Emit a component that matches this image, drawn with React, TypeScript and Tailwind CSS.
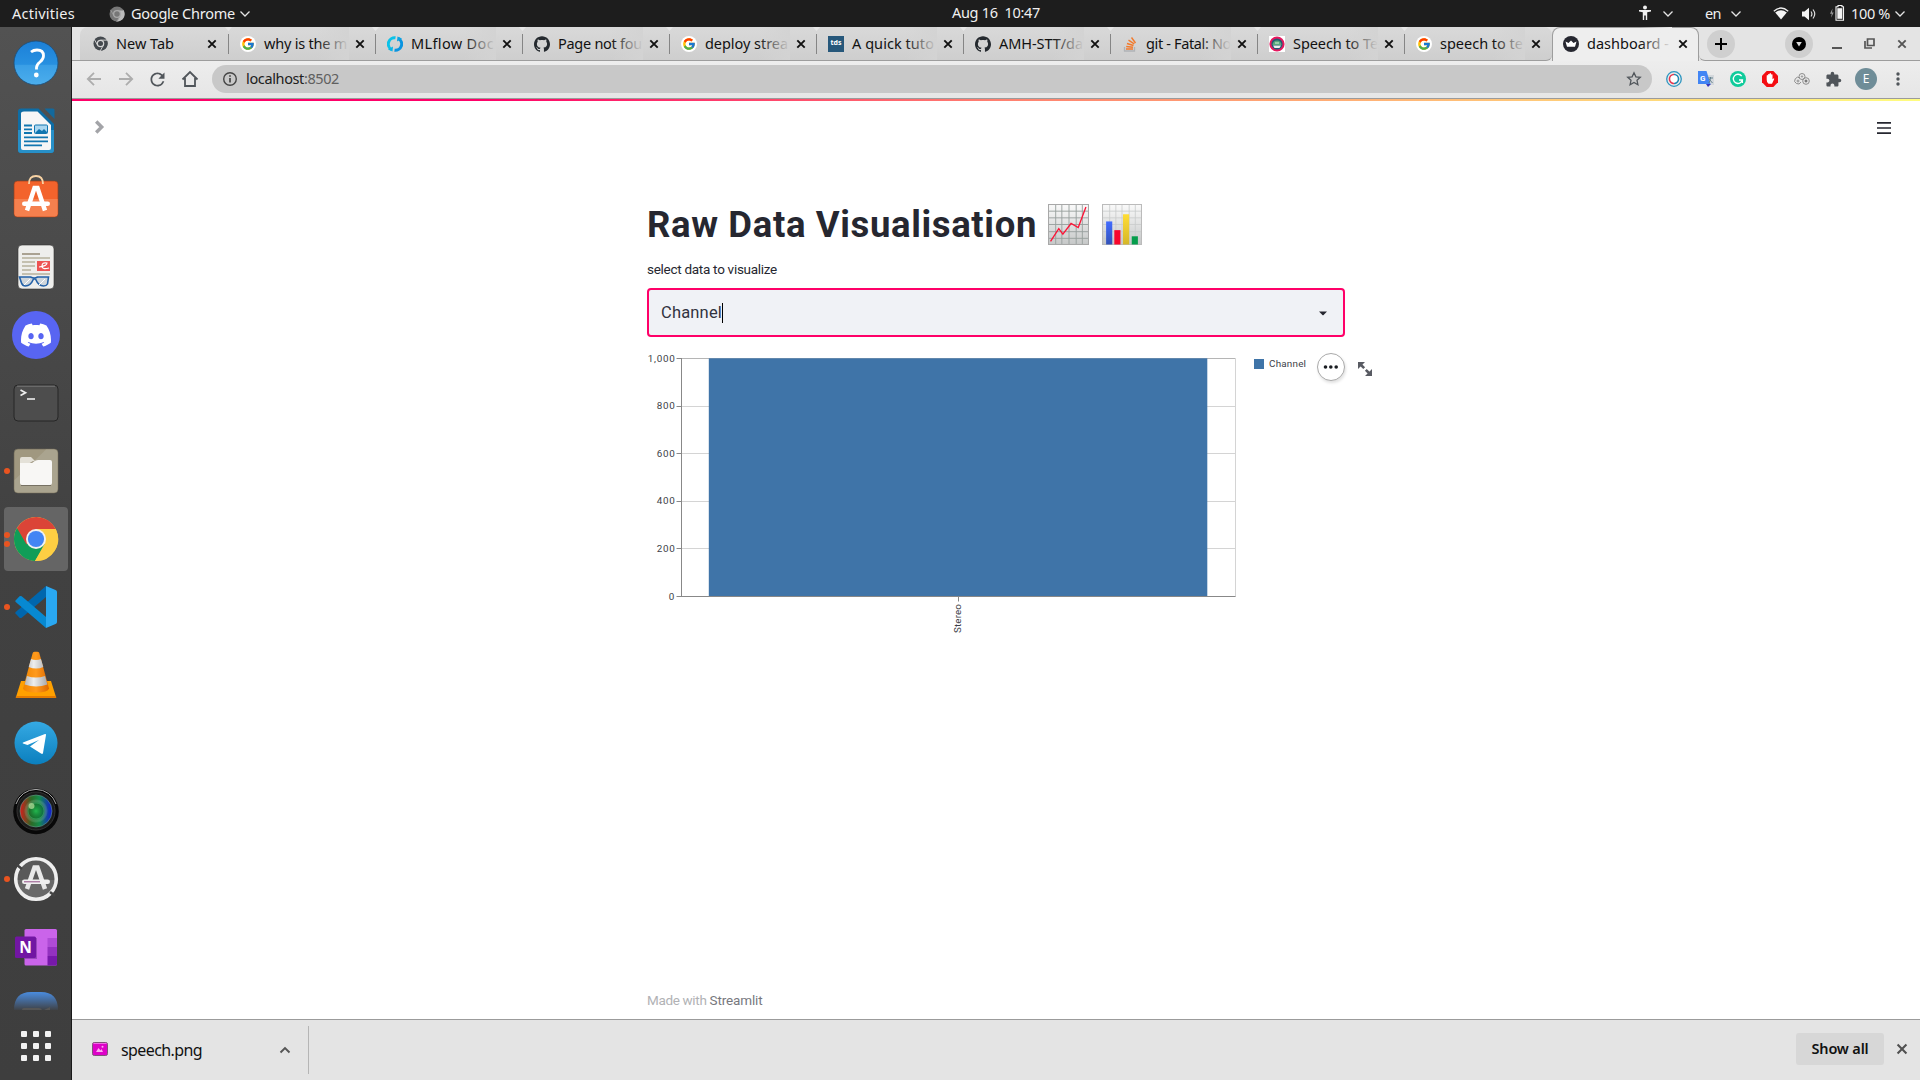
import React, { useLayoutEffect, useRef, useState } from "react";
import { SiDiscord, SiGithub } from "react-icons/si";
import { FcGoogle } from "react-icons/fc";
import { MdExtension, MdRefresh } from "react-icons/md";

const UI = "font-['Noto_Sans','Open_Sans',sans-serif]";

/* Text tracked so that it fills the given width. */
function Fit({ w, className = "", children }: { w: number; className?: string; children: string }) {
  const ref = useRef<HTMLSpanElement>(null);
  const [ls, setLs] = useState(0);
  useLayoutEffect(() => {
    if (ref.current) {
      const natural = ref.current.getBoundingClientRect().width - ls * children.length;
      setLs((w - natural) / children.length);
    }
  }, [w, children]);
  return (
    <span ref={ref} className={"inline-block shrink-0 whitespace-pre " + className} style={{ letterSpacing: ls }}>
      {children}
    </span>
  );
}

function Chevron({ className = "" }: { className?: string }) {
  return (
    <svg className={"shrink-0 " + className} width="12" height="8" viewBox="0 0 12 8" fill="none" stroke="#e4e4e4" strokeWidth="1.3">
      <path d="M1.5 1.5 6 6l4.500-4.500" />
    </svg>
  );
}

function ChromeGlyph({ size, dark }: { size: number; dark?: boolean }) {
  const a = dark ? "#44494e" : "#777";
  const b = dark ? "#44494e" : "#bbb";
  const gap = dark ? "#d4d4d4" : "#999";
  return (
    <svg width={size} height={size} viewBox="0 0 16 16" className="shrink-0">
      <circle cx="8" cy="8" r="7.500" fill={a} />
      <path d="M8 4.500h6.800A7.500 7.500 0 0 1 8 15.500l3-5.500z" fill={b} />
      <path d="M8 4.400h7M4.900 9.800 1.500 3.800M11 9.900l-3.300 6" stroke={gap} strokeWidth="1" />
      <circle cx="8" cy="8" r="4" fill={dark ? "#d6d6d6" : "#aaa"} />
      <circle cx="8" cy="8" r="2.700" fill={a} />
    </svg>
  );
}

function TopBar() {
  return (
    <header className={"flex h-[27px] w-full shrink-0 items-center bg-[#1d1d1d] text-[14.500px] leading-[27px] text-[#f0f0f0] " + UI}>
      <div className="flex w-[952px] items-center pl-3">
        <Fit w={63}>Activities</Fit>
        <div className="ml-[34px] flex"><ChromeGlyph size={16} /></div>
        <Fit w={104} className="ml-[6px]">Google Chrome</Fit>
        <Chevron className="ml-[4px]" />
      </div>
      <Fit w={88} className="-mt-[2px]">Aug 16  10:47</Fit>
      <div className="flex flex-1 items-center">
        <svg className="-mt-px ml-[598px]" width="14" height="16" viewBox="0 0 14 16" fill="#f0f0f0">
          <circle cx="7" cy="2.400" r="2" />
          <path d="M1 5h12v1.500L9.200 7.200V15H7.800v-4.500H6.200V15H4.800V7.200L1 6.500z" />
        </svg>
        <Chevron className="ml-[10px]" />
        <Fit w={16} className="ml-[31px]">en</Fit>
        <Chevron className="ml-[9px]" />
        <svg className="ml-[31px]" width="16" height="13" viewBox="0 0 16 13">
          <path d="M.8 4.200Q8-2.200 15.200 4.200" fill="none" stroke="#eee" strokeWidth="1.300" />
          <path d="M2.200 5.400Q8 1 13.800 5.400L8 12.500z" fill="#f4f4f4" />
        </svg>
        <svg className="ml-[12px]" width="16" height="14" viewBox="0 0 16 14">
          <path d="M1 4.500h2.500L8 .8v12.400L3.500 9.500H1z" fill="#f4f4f4" />
          <path d="M10 4.500q1.800 2.500 0 5M12 2.500q3.500 4.500 0 9" fill="none" stroke="#ddd" strokeWidth="1.200" />
        </svg>
        <svg className="-mt-[2px] ml-[12px]" width="16" height="16" viewBox="0 0 16 16">
          <path d="M3.500 3.500 1 8.800h1.800l-.8 4L4.700 7.500H3z" fill="#999" />
          <path d="M7 1.800h2V.5h4v1.300h1.500v13.400H7z" fill="none" stroke="#f4f4f4" strokeWidth="1.100" />
          <path d="M8.300 3.200h5v10.600h-5z" fill="#f4f4f4" />
        </svg>
        <Fit w={39} className="ml-[6px]">100 %</Fit>
        <Chevron className="ml-[4px]" />
      </div>
    </header>
  );
}

function Svg({ children }: { children: React.ReactNode }) {
  return <svg width="48" height="48" viewBox="0 0 48 48" className="shrink-0">{children}</svg>;
}

const dock: { dots: number; active?: boolean; icon: React.ReactNode }[] = [
  {
    dots: 0,
    icon: (
      <Svg>
        <defs><linearGradient id="hp" x2="0" y2="1"><stop stopColor="#1c80d8" /><stop offset=".53" stopColor="#2790e0" /><stop offset=".55" stopColor="#3a9fe6" /><stop offset="1" stopColor="#4caeec" /></linearGradient></defs>
        <circle cx="24" cy="24" r="22" fill="url(#hp)" stroke="#1b4f7c" strokeWidth=".8" />
        <path d="M19 13q2.500-2 6-2 6.500 0 6.500 5.800 0 3.400-3.500 6.200-3.500 2.800-3.500 5.500v2" fill="none" stroke="#fff" strokeWidth="2.800" />
        <circle cx="24.300" cy="36" r="2.400" fill="#fff" />
      </Svg>
    ),
  },
  {
    dots: 0,
    icon: (
      <Svg>
        <path d="M9 1.500h17.500L42 17v26q0 3-3 3H9q-3 0-3-3V4.500q0-3 3-3z" fill="#0e6da5" />
        <path d="M6 23h36v20q0 3-3 3H9q-3 0-3-3z" fill="#2790c8" />
        <path d="M32.500 1.500h8.500q1.500 0 1.500 1.500v9z" fill="#13699c" />
        <path d="M12 4.500h13.500L39 18v23q0 2-2 2H11q-2 0-2-2V6.500q0-2 3-2z" fill="#f6f6f6" />
        <path d="M12 18.500h8M12 22.300h8M12 26h8M12 30.300h24M12 34.300h24M12 38.300h18" stroke="#1176b0" strokeWidth="1.800" />
        <rect x="22.500" y="18" width="13" height="8.500" rx="1" fill="#abd7f0" stroke="#1176b0" />
        <path d="m23 26 4-4 3 2 2-2 3 3v1z" fill="#1176b0" />
      </Svg>
    ),
  },
  {
    dots: 0,
    icon: (
      <svg width="48" height="52" viewBox="0 2 48 52" className="shrink-0">
        <rect x="2" y="10" width="44" height="36" rx="3.500" fill="#f3632c" stroke="#92401f" strokeWidth=".7" />
        <path d="M2.400 28h43.200v14.500q0 3-3 3H5.400q-3 0-3-3z" fill="#f5804e" />
        <path d="M17 13q0-8 7-8t7 8" fill="none" stroke="#f8d3a4" strokeWidth="1.800" />
        <path d="M15 39.500 22.500 17h3L33 39.500" fill="none" stroke="#fff" strokeWidth="4.500" />
        <rect x="10" y="30.500" width="28" height="4.600" rx="2.300" fill="#fff" />
      </svg>
    ),
  },
  {
    dots: 0,
    icon: (
      <Svg>
        <rect x="6" y="2" width="36" height="44" rx="4" fill="#eeeeec" stroke="#333" strokeWidth=".6" />
        <path d="M10 11h18" stroke="#aaa292" strokeWidth="2" />
        <path d="M10 15h28M10 19h13M10 23h13M10 27h9M10 31h28" stroke="#c4c0b0" strokeWidth="2" />
        <rect x="25" y="18" width="13" height="10" fill="#ed5353" />
        <path d="M27 24q8-1 8-4-5-1-5 3t7 2" fill="none" stroke="#fff" strokeWidth="1.200" />
        <path d="M7.500 34h11q4 2 7 0h11l-1 7q-1 2-4 2-5 0-8-7h-2q-3 7-8 7-3 0-4-3z" fill="#cfd6dc" stroke="#2361a8" strokeWidth="1.600" />
        <path d="m12 42 6-6m9 6 6-6" stroke="#fff" />
      </Svg>
    ),
  },
  {
    dots: 0,
    icon: (
      <div className="flex size-12 items-center justify-center rounded-full bg-[#5865f2]">
        <SiDiscord size={30} color="#fff" />
      </div>
    ),
  },
  {
    dots: 0,
    icon: (
      <Svg>
        <rect x="2" y="6" width="44" height="36" rx="4" fill="#4d4d4d" stroke="#262626" strokeWidth="1" />
        <path d="M5 7.200h38" stroke="#777" />
        <path d="m8.500 11 5 2.700-5 2.700" fill="none" stroke="#eee" strokeWidth="1.700" />
        <path d="M15 20h8" stroke="#eee" strokeWidth="1.600" />
      </Svg>
    ),
  },
  {
    dots: 1,
    icon: (
      <Svg>
        <rect x="2" y="2" width="44" height="44" rx="4" fill="#a09880" stroke="#6b6655" strokeWidth=".6" />
        <path d="M2.500 33 34 2.500h8q3.500 0 3.500 3.500v36q0 3.500-3.500 3.500H6q-3.500 0-3.500-3.500z" fill="#aaa48f" />
        <path d="M8 12q0-2 2-2h9l4 4h-2l-13 8z" fill="#e4e1d8" />
        <path d="M8 16h11q1.500 0 3-1.500T26 13h12q2 0 2 2v21q0 2-2 2H10q-2 0-2-2z" fill="#f8f7f5" />
        <path d="M9 38.500h30" stroke="#777163" />
      </Svg>
    ),
  },
  {
    dots: 2,
    active: true,
    icon: (
      <Svg>
        <circle cx="24" cy="24" r="22" fill="#fdce43" />
        <path d="M5 12.900A22 22 0 0 0 23 46L33.500 29 24 24z" fill="#109d58" />
        <path d="M5 12.900A22 22 0 0 1 43.700 14H24l-9.500 15.500z" fill="#db4437" />
        <path d="M24 14h19.700A22 22 0 0 1 23 46l9.500-17z" fill="#fdce43" />
        <circle cx="24" cy="24" r="10" fill="#f1f1f1" />
        <circle cx="24" cy="24" r="8.100" fill="#4285f4" />
      </Svg>
    ),
  },
  {
    dots: 1,
    icon: (
      <Svg>
        <path d="m3.500 30.500 4 4.200q1 .8 2.200 0L34 14V3L3.700 29q-.8.700-.2 1.500z" fill="#0066ad" />
        <path d="m3.500 17.500 4-4.200q1-.8 2.200 0L34 34v11L3.700 19q-.8-.700-.2-1.500z" fill="#0789d2" />
        <path d="m34 3 9.500 4q1.500.7 1.500 2v30q0 1.300-1.500 2L34 45z" fill="#29a8f2" />
      </Svg>
    ),
  },
  {
    dots: 0,
    icon: (
      <Svg>
        <defs>
          <linearGradient id="vo"><stop stopColor="#f08500" /><stop offset=".5" stopColor="#ff9a1c" /><stop offset="1" stopColor="#dc6700" /></linearGradient>
          <linearGradient id="vw"><stop stopColor="#b5b5b5" /><stop offset=".4" stopColor="#eee" /><stop offset="1" stopColor="#a9a9a9" /></linearGradient>
        </defs>
        <path d="M9 30h30l5 16H4z" fill="#ffa000" />
        <path d="M4 45h40l.3 2H3.700z" fill="#e47b00" />
        <path d="M20.700 2q.5-1.300 2-1.300h2.600q1.500 0 2 1.300L37 37.500q-1 4-13 4t-13-4z" fill="url(#vo)" />
        <path d="M19 8q5 2 10 0l2.300 8q-7 3-14.600 0zM15 25q9 3 18 0l2.400 8.500q-11 4-22.800 0z" fill="url(#vw)" />
      </Svg>
    ),
  },
  {
    dots: 0,
    icon: (
      <Svg>
        <defs><linearGradient id="tg" x2="0" y2="1"><stop stopColor="#35a9e3" /><stop offset="1" stopColor="#0b7fbe" /></linearGradient></defs>
        <circle cx="24" cy="24" r="21.500" fill="url(#tg)" />
        <path d="M11 23.500 33 15q1.200-.3 1 1l-3 18q-.5 1.500-2 .5L18 27.500l9-6.500-11.500 5L11 24.500q-.8-.500 0-1z" fill="#fff" />
      </Svg>
    ),
  },
  {
    dots: 0,
    icon: (
      <Svg>
        <defs>
          <linearGradient id="ln"><stop stopColor="#d91a1a" /><stop offset=".35" stopColor="#2c6a26" /><stop offset=".6" stopColor="#148c4a" /><stop offset="1" stopColor="#1418d8" /></linearGradient>
          <radialGradient id="lg"><stop stopColor="#23b84e" /><stop offset=".6" stopColor="#11702d" stopOpacity=".6" /><stop offset="1" stopColor="#fff" stopOpacity="0" /></radialGradient>
        </defs>
        <circle cx="24" cy="24.400" r="22.800" fill="#080808" />
        <path d="M4 17a21 21 0 0 1 40 0" fill="none" stroke="#aaa" strokeWidth="1" />
        <circle cx="24" cy="24" r="19" fill="#1b1b1b" stroke="#343434" />
        <circle cx="24" cy="24" r="16" fill="url(#ln)" stroke="#63998b" strokeWidth=".6" />
        <circle cx="24" cy="24" r="12" fill="url(#lg)" />
        <circle cx="24" cy="24" r="8" fill="none" stroke="#31a65c" strokeOpacity=".6" />
        <circle cx="19.500" cy="19" r="3" fill="#b9e4a0" opacity=".7" />
      </Svg>
    ),
  },
  {
    dots: 1,
    icon: (
      <Svg>
        <circle cx="24" cy="24" r="20" fill="#595959" />
        <path d="M4 25h40a20 20 0 0 1-40 0z" fill="#696969" />
        <circle cx="24" cy="24" r="20.300" fill="none" stroke="#eee" strokeWidth="3.600" />
        <path d="m5 10 5 4M38 37l5 4" stroke="#444" strokeWidth="2.500" />
        <path d="M15 34 22.500 12.500h3L33 34" fill="none" stroke="#e8e8e8" strokeWidth="4.500" />
        <rect x="10" y="24.500" width="28" height="4.600" rx="2.300" fill="#f0f0f0" />
        <path d="M12 26.800h16" stroke="#924f86" />
      </Svg>
    ),
  },
  {
    dots: 0,
    icon: (
      <Svg>
        <rect x="12.500" y="6" width="32.500" height="36.500" rx="1.500" fill="#ca64ea" />
        <path d="M35.500 15H45v9h-9.500z" fill="#ae4bd5" />
        <path d="M35.500 24H45v9h-9.500z" fill="#9332bf" />
        <path d="M35.500 33H45v8q0 1.500-1.500 1.500h-8z" fill="#7719aa" />
        <rect x="13" y="15" width="12" height="21" fill="#9b49bd" />
        <rect x="3" y="13.500" width="21" height="21.500" rx="1.500" fill="#7216a3" />
        <text x="13.500" y="30" textAnchor="middle" fill="#fff" fontFamily="Noto Sans, sans-serif" fontWeight="700" fontSize="15.500">N</text>
      </Svg>
    ),
  },
];

function Dock() {
  return (
    <aside className="flex w-[72px] shrink-0 flex-col border-r border-[#191919] bg-gradient-to-b from-[#525252] via-[#414141] via-50% to-[#3e3e3e] pt-[2px]">
      {dock.map((d, i) => (
        <div key={i} className="flex h-[68px] shrink-0 items-center justify-center pl-px">
          <div className={"relative flex size-16 items-center justify-center rounded-[4px] " + (d.active ? "bg-[#656565]" : "")}>
            {d.icon}
            <div className="absolute top-0 left-0 flex h-16 w-[6px] flex-col items-center justify-center gap-[3px]">
              {d.dots > 0 && <span className="size-[6px] rounded-full bg-[#e95420]" />}
              {d.dots > 1 && <span className="size-[6px] rounded-full bg-[#e95420]" />}
            </div>
          </div>
        </div>
      ))}
      <svg width="72" height="29" viewBox="0 0 72 29" className="shrink-0">
        <defs><linearGradient id="zm" x2="0" y2="1"><stop stopColor="#4a8cdf" /><stop offset="1" stopColor="#3f4247" /></linearGradient></defs>
        <path d="M14 29q0-18 17-18h10q17 0 17 18z" fill="url(#zm)" />
        <path d="M22 29q0-2 2-2h15q2 0 3 2zm22 0 6-3v3z" fill="#555" />
      </svg>
      <div className="grid grid-cols-3 gap-[6px] self-center pt-[21px] pl-px">
        {Array.from({ length: 9 }, (_, i) => <span key={i} className="size-[6px] rounded-[1px] bg-[#f2f2f2]" />)}
      </div>
    </aside>
  );
}

const G = (
  <div className="flex size-4 items-center justify-center rounded-full bg-white"><FcGoogle size={14} /></div>
);
const GH = <SiGithub size={16} color="#24292e" />;

const tabs: { title: string; w: number; icon: React.ReactNode }[] = [
  { title: "New Tab", w: 58, icon: <ChromeGlyph size={15} dark /> },
  { title: "why is the m", w: 83, icon: G },
  {
    title: "MLflow Doc", w: 83, icon: (
      <svg width="16" height="16" viewBox="0 0 16 16" fill="none" strokeWidth="3">
        <path d="M4.500 13.500A6.300 6.300 0 0 1 8.500 1.800" stroke="#0bc2e8" />
        <path d="M11.500 2.500A6.300 6.300 0 0 1 7.500 14.200" stroke="#0a94e0" />
        <path d="m6 10.500-.5 5-4.500-2z" fill="#0bb5e8" />
        <path d="m10 5.500.5-5 4.500 2z" fill="#0aa5e4" />
      </svg>
    ),
  },
  { title: "Page not fou", w: 84, icon: GH },
  { title: "deploy strea", w: 83, icon: G },
  {
    title: "A quick tuto", w: 82, icon: (
      <div className="flex size-4 items-center justify-center bg-[#27587b] font-['Noto_Sans',sans-serif] text-[7px] font-bold text-white">tds</div>
    ),
  },
  { title: "AMH-STT/da", w: 84, icon: GH },
  {
    title: "git - Fatal: No", w: 85, icon: (
      <svg width="16" height="16" viewBox="0 0 16 16" fill="none">
        <path d="M2.500 11v4h10v-4" stroke="#b0b3b6" strokeWidth="1.300" />
        <path d="M4 13h7M4.200 10.500l6.800.8M5 7.500l6.500 2M6.500 4.200l5.700 3.700M9.500 1.500l4 5.500" stroke="#f27a2c" strokeWidth="1.400" />
      </svg>
    ),
  },
  {
    title: "Speech to Te", w: 85, icon: (
      <svg width="16" height="16" viewBox="0 0 16 16">
        <path fill="#fff" d="M0 0h16v16H0z" />
        <circle cx="8" cy="8" r="6.600" fill="#245a73" stroke="#e6185f" strokeWidth="2" />
        <path d="M3.500 9a4.500 4.500 0 0 1 9 0z" fill="#58a77b" />
        <path d="M4 9.500h8l-1.500 2.500h-5z" fill="#eee" />
        <path d="M6 7h4" stroke="#d8f0dc" />
      </svg>
    ),
  },
  { title: "speech to te", w: 83, icon: G },
];

function CloseX({ className = "", color = "#111" }: { className?: string; color?: string }) {
  return (
    <svg width="10" height="10" viewBox="0 0 10 10" stroke={color} strokeWidth="1.900" className={"shrink-0 " + className}>
      <path d="m1.300 1.300 7.400 7.400m0-7.400L1.300 8.700" />
    </svg>
  );
}

function TabBody({ icon, title, w, fade }: { icon: React.ReactNode; title: string; w: number; fade: string }) {
  return (
    <>
      <div className="flex w-4 shrink-0 justify-center">{icon}</div>
      <div className="relative ml-2 w-[85px] text-[14.500px] leading-[33px] text-[#111]">
        <Fit w={w}>{title}</Fit>
        <div className={"absolute top-0 right-0 h-full w-[32px] bg-gradient-to-r from-transparent " + fade} />
      </div>
      <CloseX className="ml-[6px]" />
    </>
  );
}

function TabStrip() {
  return (
    <div className={"flex h-[34px] shrink-0 bg-[#e4e4e4] " + UI}>
      <div className="w-2 border-b border-[#9d9d9d]" />
      <div className="flex w-[1472px] rounded-t-[8px] rounded-br-[6px] border-b border-[#9d9d9d] bg-gradient-to-b from-[#d9d9d9] to-[#cecece] pl-[2px]">
        {tabs.map((t, i) => (
          <div key={i} className={"relative flex w-[147px] shrink-0 items-center " + (i === 0 ? "pl-[10px]" : "pl-[11px]")}>
            <TabBody icon={t.icon} title={t.title} w={t.w} fade={i === 0 ? "to-transparent" : "to-[#d3d3d3]"} />
            {i < 9 && <span className="absolute top-[7px] right-0 h-5 w-px bg-[#858585]" />}
            {i < 9 && <span className="absolute top-0 right-[-3px] h-[4px] w-[7px] bg-[#e6e6e6] [clip-path:polygon(0_0,100%_0,50%_100%)]" />}
          </div>
        ))}
      </div>
      <div className="flex w-[147px] items-center rounded-t-[8px] border border-b-0 border-[#9d9d9d] bg-[#eeeeee] pb-[2px] pl-[10px]">
        <TabBody
          title="dashboard -"
          w={82}
          fade="to-[#eeeeee]"
          icon={
            <svg width="16" height="16" viewBox="0 0 16 16">
              <circle cx="8" cy="8" r="8" fill="#262730" />
              <path d="m2.500 5.500 3 1.500L8 4.500 10.500 7l3-1.500L12 10.800H4z" fill="#fff" />
            </svg>
          }
        />
      </div>
      <div className="flex flex-1 items-center rounded-bl-[6px] border-b border-[#9d9d9d] pl-[8px]">
        <div className="flex size-7 items-center justify-center rounded-full bg-[#cfcfcf]">
          <svg width="12" height="12" stroke="#000" strokeWidth="2"><path d="M6 0v12M0 6h12" /></svg>
        </div>
        <div className="ml-[50px] flex size-7 items-center justify-center rounded-full bg-[#cfcfcf]">
          <svg width="14" height="14"><circle cx="7" cy="7" r="7" /><path d="M4.200 5h5.600L7 9.500z" fill="#ddd" /></svg>
        </div>
        <svg className="ml-[19px]" width="10" height="12"><path d="M0 10h10" stroke="#555" strokeWidth="2" /></svg>
        <svg className="ml-[22px]" width="11" height="11" fill="none" stroke="#555" strokeWidth="1.700"><path d="M3.500 1h6.500v6.500H3.500zM1 3v7h7" /></svg>
        <CloseX className="ml-[22px]" color="#555" />
      </div>
    </div>
  );
}

function Toolbar() {
  return (
    <div className={"flex h-[38px] shrink-0 items-center border-b border-[#9b9b9b] bg-gradient-to-b from-[#ededed] to-[#e6e6e6] pb-px pl-[14px] text-[14.500px] " + UI}>
      <svg width="16" height="16" fill="none" stroke="#adadad" strokeWidth="1.800"><path d="M15 8H2.200M8 1.800 1.800 8 8 14.200" /></svg>
      <svg className="ml-4" width="16" height="16" fill="none" stroke="#adadad" strokeWidth="1.800"><path d="M1 8h12.800M8 1.800 14.200 8 8 14.200" /></svg>
      <MdRefresh className="ml-[13px]" size={21} color="#50555a" />
      <svg className="ml-[13px]" width="18" height="18" fill="none" stroke="#50555a" strokeWidth="1.800"><path d="M1.500 9.500 9 2l7.500 7.500M4 8v8h10V8" /></svg>
      <div className="ml-[13px] flex h-7 w-[1440px] items-center rounded-full bg-[#c8c8c8] pr-[10px] pl-[11px]">
        <svg width="14" height="14" fill="none" stroke="#444" strokeWidth="1.400"><circle cx="7" cy="7" r="6.300" /><path d="M7 6v4.500M7 3.300v1.500" strokeWidth="1.700" /></svg>
        <div className="mb-px ml-[9px] flex flex-1 leading-[27px]">
          <Fit w={58} className="text-[#202020]">localhost</Fit>
          <Fit w={35} className="text-[#606060]">:8502</Fit>
        </div>
        <svg width="16" height="16" viewBox="0 0 16 16" fill="none" stroke="#50555a" strokeWidth="1.300"><path d="m8 1.800 1.900 4 4.400.5-3.300 3 .9 4.400L8 11.500l-3.900 2.200.9-4.400-3.300-3 4.400-.5z" /></svg>
      </div>
      <svg className="ml-[14px]" width="16" height="16" fill="none"><circle cx="8" cy="8" r="7.300" stroke="#2c95c0" strokeWidth="1.300" /><path d="M8 3.500a4.500 4.500 0 0 0 0 9" stroke="#e93750" strokeWidth="1.600" /><path d="M8 3.500a4.500 4.500 0 0 1 0 9" stroke="#1e88b4" strokeWidth="1.600" /><circle cx="8" cy="8" r="3.400" fill="#fff" /></svg>
      <svg className="ml-4" width="16" height="16"><path d="M6 4h10v10H8z" fill="#d4d8dc" /><path d="M0 0h8.500l4 13H0z" fill="#4285f4" /><path d="m8 13 5 0-3 3z" fill="#3536be" /><path d="M10 7h5m-2.500-1v1c0 2-1 4-2 5m.5-4 3.500 4" stroke="#65828e" fill="none" /><text x="2" y="9.500" fontSize="8" fontWeight="700" fill="#fff" fontFamily="Roboto, sans-serif">G</text></svg>
      <svg className="ml-4" width="16" height="16" fill="none"><circle cx="8" cy="8" r="8" fill="#10cb9b" /><path d="M11.700 5.200A4.600 4.600 0 1 0 12.400 9H9m3.400 0v3" stroke="#fff" strokeWidth="1.300" /></svg>
      <svg className="ml-4" width="16" height="16"><path d="M4.700 0h6.600L16 4.700v6.600L11.300 16H4.700L0 11.300V4.700z" fill="#f40d12" /><path d="M4.700 8V4.500q.7-.8 1.400 0V3.300q.7-.8 1.400 0v-.8q.8-.8 1.500 0v1q.8-.7 1.500 0v4.800l1.300-1q.8.200.2 1.200L10 12.700H6.500q-1.800-1-1.800-4z" fill="#fff" /></svg>
      <svg className="ml-4" width="16" height="16" fill="none" stroke="#8d8d8d"><circle cx="8" cy="5.500" r="3" /><circle cx="12" cy="10" r="3.300" /><path d="M7 11a3.300 3.300 0 1 1-1-4" /><circle cx="4" cy="10" r="1" /><circle cx="12" cy="10" r="1" stroke="#555" /><circle cx="8" cy="5.500" r=".7" /></svg>
      <MdExtension className="ml-[15px]" size={17} color="#50555a" />
      <div className="ml-[13px] flex size-[22px] items-center justify-center rounded-full bg-[#6f8d98] text-[12px] text-white">E</div>
      <svg className="ml-[19px]" width="4" height="14" fill="#50555a"><circle cx="2" cy="2" r="1.700" /><circle cx="2" cy="7" r="1.700" /><circle cx="2" cy="12" r="1.700" /></svg>
    </div>
  );
}

function EmojiLine() {
  return (
    <svg width="41" height="41" viewBox="0 0 40 40" className="shrink-0">
      <defs><linearGradient id="eg" x2="0" y2="1"><stop stopColor="#fafafa" /><stop offset="1" stopColor="#c6c8c8" /></linearGradient></defs>
      <rect x=".5" y=".5" width="39" height="39" fill="url(#eg)" stroke="#a8a8a8" />
      <path d="M7.500 1v38M13.500 1v38M20.500 1v38M27.500 1v38M33.500 1v38M1 7h38M1 13.500h38M1 20h38M1 27h38M1 33.500h38" stroke="#98a09d" strokeWidth=".9" />
      <path d="m2.500 36.500 8-12.500 4 5.500 8-10.500 7 4L37 3" fill="none" stroke="#fc1538" strokeWidth="1.300" />
    </svg>
  );
}

function EmojiBars() {
  return (
    <svg width="40" height="41" viewBox="0 0 39 40" className="shrink-0">
      <defs>
        <linearGradient id="bb" x2="0" y2="1"><stop stopColor="#426cff" /><stop offset="1" stopColor="#3151b8" /></linearGradient>
        <linearGradient id="by" x2="0" y2="1"><stop stopColor="#ffdd35" /><stop offset="1" stopColor="#d5b629" /></linearGradient>
      </defs>
      <rect x=".5" y=".5" width="38" height="39" fill="url(#eg)" stroke="#bbb" />
      <path d="M7.500 1v38M13.500 1v38M19.500 1v38M26.500 1v38M32.500 1v38M1 7h37M1 13.500h37M1 20h37M1 27h37M1 33.500h37" stroke="#c9cccb" strokeWidth=".8" />
      <path d="M4 17h6v22.500H4z" fill="url(#bb)" /><path d="M12 25.500h6v14h-6z" fill="#f8062c" />
      <path d="M20.500 10h6v29.500h-6z" fill="url(#by)" /><path d="M29 31.500h6v8h-6z" fill="#069d4c" />
    </svg>
  );
}

const ticks = [
  { label: "1,000", y: 12.5, w: 27, ty: 15.8 },
  { label: "800", y: 60.5, w: 18, ty: 62.8 },
  { label: "600", y: 107.5, w: 18, ty: 110.8 },
  { label: "400", y: 155.5, w: 18, ty: 157.8 },
  { label: "200", y: 202.5, w: 18, ty: 205.8 },
  { label: "0", y: 250.5, w: 6, ty: 253.8 },
];

function Chart() {
  return (
    <div className="mt-[9px] flex">
      <svg width="670" height="300" viewBox="0 0 670 300" className="shrink-0" fontFamily="Roboto, sans-serif" fontSize="9.900" fill="#3e3f48">
        {ticks.map((t) => (
          <g key={t.label}>
            <path d={`M34 ${t.y}H588.500`} stroke={t.y < 20 ? "#b5b5b5" : "#d4d4d4"} />
            <path d={`M29.500 ${t.y}H34.500`} stroke="#888" />
            <text x={27.8 - t.w} y={t.ty} textLength={t.w}>{t.label}</text>
          </g>
        ))}
        <path d="M588.500 12.500v238" stroke="#d4d4d4" />
        <rect x="61.800" y="12.300" width="498.500" height="238.200" fill="#3f74a8" />
        <path d="M34.500 12v239M34 250.500h554.500M311.500 250.500v5" stroke="#888" fill="none" />
        <text transform="translate(314 287) rotate(-90)" textLength="29">Stereo</text>
        <rect x="607" y="13" width="10" height="10" fill="#3f74a8" />
        <text x="622" y="21" textLength="37">Channel</text>
      </svg>
      <div className="mt-[7px] flex size-7 shrink-0 items-center justify-center rounded-full border border-[#aaa] bg-white shadow-[1px_2px_3px_rgba(0,0,0,0.12)]">
        <svg width="16" height="4" fill="#1b1e23"><circle cx="2.500" cy="2" r="1.800" /><circle cx="7.800" cy="2" r="1.800" /><circle cx="13.200" cy="2" r="1.800" /></svg>
      </div>
      <svg className="mt-[16px] ml-[13px] shrink-0" width="14" height="14" fill="#595b63" stroke="#595b63">
        <path d="M0 0h7L0 7zM14 14H7l7-7z" stroke="none" />
        <path d="m2 2 4.200 4.200M12 12 7.800 7.800" strokeWidth="2.600" />
      </svg>
    </div>
  );
}

function StreamlitPage() {
  return (
    <main className="flex flex-1 flex-col bg-white font-[Roboto,sans-serif] text-[#262730]">
      <div className="h-[2px] shrink-0 bg-[linear-gradient(90deg,#ff0068_0%,#ff0068_22%,#ff8070_50%,#fffd80_100%)]" />
      <div className="flex h-[103px] shrink-0 justify-between pt-[19px] pr-[29px] pl-[22px]">
        <svg width="12" height="14" fill="none" stroke="#a3a4a8" strokeWidth="3.400"><path d="m2.200 1.500 5.500 5.500-5.500 5.500" /></svg>
        <svg className="mt-px" width="14" height="14" stroke="#262730" strokeWidth="1.700"><path d="M0 1.800h14M0 7h14M0 12.200h14" /></svg>
      </div>
      <div className="ml-[575px] flex w-[730px] flex-1 flex-col self-start">
        <h1 className="flex h-[41px] items-center text-[36.500px] leading-[41px] font-bold">
          <Fit w={390}>Raw Data Visualisation</Fit>
          <span className="ml-[11px] flex gap-[13px]"><EmojiLine /><EmojiBars /></span>
        </h1>
        <label className="mt-[14px] h-5 text-[13.500px] leading-5"><Fit w={130}>select data to visualize</Fit></label>
        <div className="mt-[9px] flex h-[49px] w-[698px] shrink-0 items-center rounded-[4px] border-2 border-[#ff0068] bg-[#f0f2f6] pr-[16px] pl-[12px] text-[16.500px] text-[#31333f]">
          <Fit w={61} className="pt-px">Channel</Fit>
          <span className="h-5 w-px bg-black" />
          <svg className="mt-px ml-auto" width="8" height="5"><path d="M0 .5h8L4.600 4q-.6.500-1.200 0z" fill="#262730" /></svg>
        </div>
        <Chart />
        <footer className="mt-auto mb-[9px] flex text-[13.500px] leading-5">
          <Fit w={62.5} className="text-[#b1b2b5]">Made with </Fit>
          <Fit w={53} className="text-[#77787e]">Streamlit</Fit>
        </footer>
      </div>
    </main>
  );
}

function DownloadBar() {
  return (
    <div className={"flex h-[61px] shrink-0 items-center border-t border-[#9b9b9b] bg-[#e4e4e4] text-[#111] " + UI}>
      <div className="flex h-12 w-[237px] items-center border-r border-[#b5b5b5] pl-5">
        <svg className="-mt-[2px]" width="16" height="14"><rect x=".5" y=".5" width="15" height="13" rx="1.800" fill="#dd02c8" stroke="#80527b" /><path d="M1.500 1.500h13" stroke="#f269e5" /><path d="m4 10 2.500-4 2 2.500L9.500 7l1.500 3z" fill="#ffa9f2" /><circle cx="10.500" cy="4.800" r="1" fill="#ffa9f2" /></svg>
        <Fit w={81} className="ml-[13px] text-[16px]">speech.png</Fit>
        <svg className="ml-[77px]" width="12" height="8" fill="none" stroke="#555" strokeWidth="1.900"><path d="M1.500 6.500 6 2l4.500 4.500" /></svg>
      </div>
      <div className="mr-[12px] mb-[2px] ml-auto flex h-8 w-[88px] items-center justify-center rounded-[3px] bg-[#d7d7d7] text-[14.500px] font-semibold">
        <Fit w={57}>Show all</Fit>
      </div>
      <svg width="12" height="12" viewBox="0 0 10 10" stroke="#505050" strokeWidth="1.700" className="mr-[12px] mb-[2px]">
        <path d="m1.300 1.300 7.400 7.400m0-7.400L1.300 8.700" />
      </svg>
    </div>
  );
}

export default function App() {
  return (
    <div className="flex h-[1080px] w-[1920px] flex-col overflow-hidden">
      <TopBar />
      <div className="flex min-h-0 flex-1">
        <Dock />
        <section className="flex min-w-0 flex-1 flex-col">
          <TabStrip />
          <Toolbar />
          <StreamlitPage />
          <DownloadBar />
        </section>
      </div>
    </div>
  );
}
